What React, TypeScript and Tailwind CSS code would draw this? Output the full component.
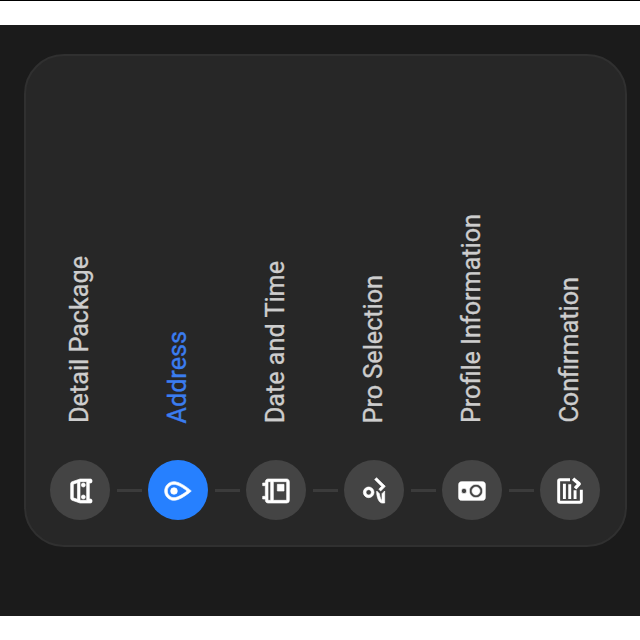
import { Fragment } from "react";
import {
  MdOutlineDirectionsCar,
  MdOutlineLocationOn,
  MdOutlineEvent,
  MdOutlineHowToReg,
  MdSpeaker,
} from "react-icons/md";

function ConfirmIcon({ className }: { className?: string }) {
  return (
    <svg viewBox="0 0 24 24" className={className} fill="none">
      <g stroke="currentColor" strokeWidth="2.2" strokeLinejoin="round">
        <path d="M20.5 12V4.5a1 1 0 0 0-1-1H4.5a1 1 0 0 0-1 1v15a1 1 0 0 0 1 1H13" />
        <path d="M6 7.8h11.5M6 11.8h11M6 15.8h6.5" />
        <path d="M14 15.8l3.3 3.1 3.9-4.6" strokeWidth="2.6" />
      </g>
    </svg>
  );
}

const steps = [
  { label: "Detail Package", Icon: MdOutlineDirectionsCar },
  { label: "Address", Icon: MdOutlineLocationOn, active: true },
  { label: "Date and Time", Icon: MdOutlineEvent },
  { label: "Pro Selection", Icon: MdOutlineHowToReg },
  { label: "Profile Information", Icon: MdSpeaker },
  { label: "Confirmation", Icon: ConfirmIcon },
];

export default function App() {
  return (
    <div className="h-[640px] w-[640px] overflow-hidden border-t border-black bg-white pt-6 font-[Roboto,sans-serif]">
      <main className="h-[591px] bg-[#1b1b1b] pt-[29px] pl-6">
        <section className="flex h-[493px] w-[603px] items-end rounded-[40px] border-2 border-[#303030] bg-[#272727] pb-[25px] pl-[24px]">
          {steps.map(({ label, Icon, active }, i) => (
            <Fragment key={label}>
              {i > 0 && (
                <div className="flex h-[60px] w-[38px] items-center justify-center">
                  <div className="h-[3px] w-[25px] bg-[#3b3b3b]" />
                </div>
              )}
              <div className="flex w-[60px] flex-col items-center gap-[37px]">
                <span
                  className={`rotate-180 text-[25.2px] leading-[30px] whitespace-nowrap [writing-mode:vertical-rl] [-webkit-text-stroke:0.35px_currentColor] ${active ? "text-[#3b7df0]" : "text-[#cdcdcd]"}`}
                >
                  {label}
                </span>
                <div
                  className={`flex size-[60px] items-center justify-center rounded-full pr-px pt-px text-white ${active ? "bg-[#2680ff]" : "bg-[#444444]"}`}
                >
                  <Icon className="size-8 -rotate-90 stroke-[0.5] [&_path[fill=none]]:stroke-none" />
                </div>
              </div>
            </Fragment>
          ))}
        </section>
      </main>
    </div>
  );
}
